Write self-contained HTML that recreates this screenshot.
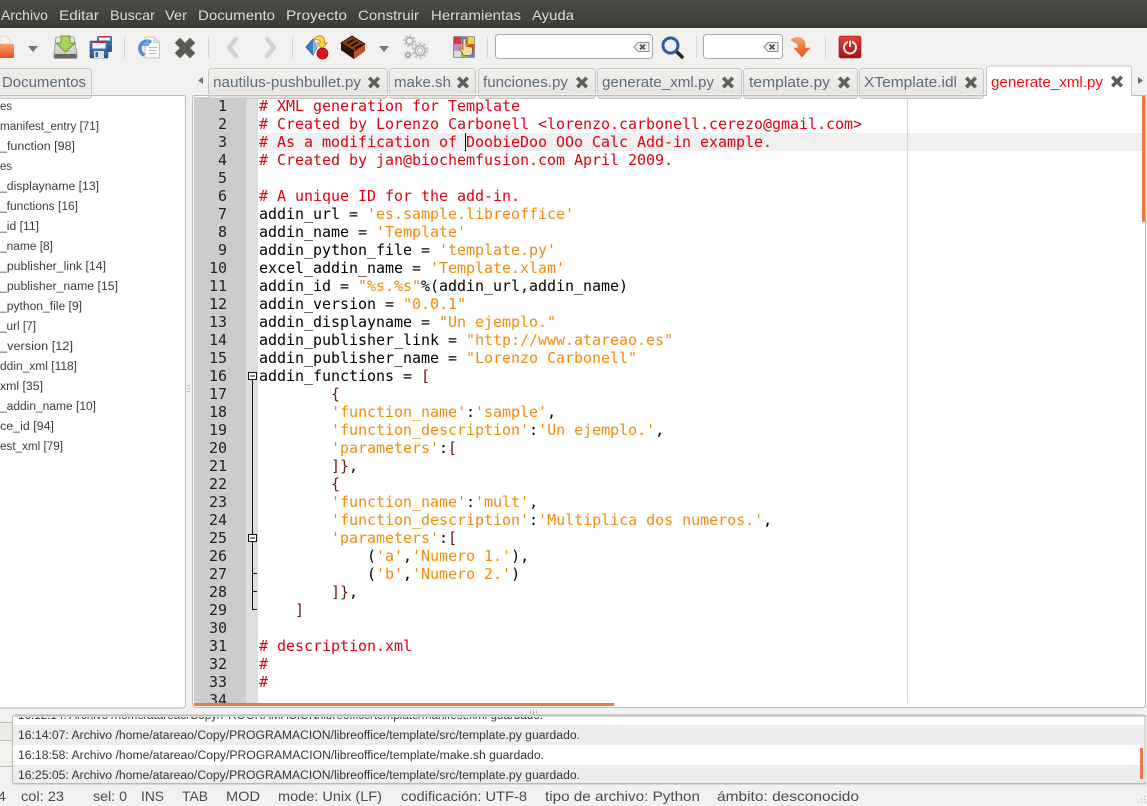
<!DOCTYPE html>
<html><head><meta charset="utf-8">
<style>
html,body{margin:0;padding:0;width:1147px;height:806px;overflow:hidden;background:#f2f1f0}
#code,#nums{position:absolute;top:0;margin:0;font:15px/18px "DejaVu Sans Mono","Liberation Mono",monospace;white-space:pre;letter-spacing:-.03px}
#code{left:65px;color:#000}
#nums{left:0;width:33px;text-align:right;color:#222}
#clip{position:absolute;left:194px;top:97px;width:950px;height:606px;overflow:hidden;z-index:1}
.c{color:#e3000f}.s{color:#f58a0b}.b{color:#6b1414}
svg{position:absolute;left:0;top:0}
#top{z-index:3}
#bg{z-index:0}
text{font-family:"Liberation Sans","DejaVu Sans",sans-serif}
</style></head><body>
<svg id="bg" width="1147" height="806" viewBox="0 0 1147 806">
<defs>
<linearGradient id="menu" x1="0" y1="0" x2="0" y2="1"><stop offset="0" stop-color="#504e48"/><stop offset=".15" stop-color="#4b4943"/><stop offset="1" stop-color="#3d3b36"/></linearGradient>
<linearGradient id="tab" x1="0" y1="0" x2="0" y2="1"><stop offset="0" stop-color="#f2f1f0"/><stop offset="1" stop-color="#e4e2df"/></linearGradient>
<linearGradient id="org" x1="0" y1="0" x2="0" y2="1"><stop offset="0" stop-color="#f6a26b"/><stop offset="1" stop-color="#e5511e"/></linearGradient>
<linearGradient id="red" x1="0" y1="0" x2="0" y2="1"><stop offset="0" stop-color="#e63c3c"/><stop offset="1" stop-color="#a01418"/></linearGradient>
<linearGradient id="disk" x1="0" y1="0" x2="0" y2="1"><stop offset="0" stop-color="#ecece8"/><stop offset="1" stop-color="#c4c4be"/></linearGradient>
<linearGradient id="blue" x1="0" y1="0" x2="0" y2="1"><stop offset="0" stop-color="#4f7fc0"/><stop offset="1" stop-color="#2a5496"/></linearGradient>
</defs>
<rect width="1147" height="806" fill="#f2f1f0"/>
<rect width="1147" height="28" fill="url(#menu)"/>
<!-- side panel frame -->
<rect x="-4" y="95" width="189.500" height="613" rx="3" fill="#fff" stroke="#bdbab3"/>
<!-- editor frame -->
<rect x="192.500" y="95.500" width="953" height="612" rx="3" fill="#fff" stroke="#bdbab3"/>
<rect x="194" y="97" width="52" height="606" fill="#cccccc"/>
<rect x="246" y="97" width="12" height="606" fill="#dedede"/>
<rect x="258" y="133" width="886" height="18" fill="#f0f0f0"/>
<rect x="907" y="97" width="1" height="606" fill="#c9e6c4"/>
<!-- message panel -->
<rect x="12" y="716" width="1133" height="67" fill="#fff"/>
<rect x="13" y="725" width="1131" height="20" fill="#ededed"/>
<rect x="13" y="765" width="1131" height="18" fill="#ededed"/>
</svg>
<div id="clip">
<pre id="nums">1
2
3
4
5
6
7
8
9
10
11
12
13
14
15
16
17
18
19
20
21
22
23
24
25
26
27
28
29
30
31
32
33
34</pre>
<pre id="code"><span class="c"># XML generation for Template
# Created by Lorenzo Carbonell &lt;lorenzo.carbonell.cerezo@gmail.com&gt;
# As a modification of DoobieDoo OOo Calc Add-in example.
# Created by jan@biochemfusion.com April 2009.

# A unique ID for the add-in.</span>
addin_url = <span class="s">'es.sample.libreoffice'</span>
addin_name = <span class="s">'Template'</span>
addin_python_file = <span class="s">'template.py'</span>
excel_addin_name = <span class="s">'Template.xlam'</span>
addin_id = <span class="s">"%s.%s"</span>%(addin_url,addin_name)
addin_version = <span class="s">"0.0.1"</span>
addin_displayname = <span class="s">"Un ejemplo."</span>
addin_publisher_link = <span class="s">"http://www.atareao.es"</span>
addin_publisher_name = <span class="s">"Lorenzo Carbonell"</span>
addin_functions = <span class="b">[</span>
        <span class="b">{</span>
        <span class="s">'function_name'</span>:<span class="s">'sample'</span>,
        <span class="s">'function_description'</span>:<span class="s">'Un ejemplo.'</span>,
        <span class="s">'parameters'</span>:<span class="b">[</span>
        <span class="b">]}</span>,
        <span class="b">{</span>
        <span class="s">'function_name'</span>:<span class="s">'mult'</span>,
        <span class="s">'function_description'</span>:<span class="s">'Multiplica dos numeros.'</span>,
        <span class="s">'parameters'</span>:<span class="b">[</span>
            (<span class="s">'a'</span>,<span class="s">'Numero 1.'</span>),
            (<span class="s">'b'</span>,<span class="s">'Numero 2.'</span>)
        <span class="b">]}</span>,
    <span class="b">]</span>

<span class="c"># description.xml
#
#</span>
</pre>
</div>
<svg id="top" width="1147" height="806" viewBox="0 0 1147 806">
<!-- menu -->
<g font-size="14" fill="#dfdbd2">
<text x="1" y="20" textLength="47" lengthAdjust="spacingAndGlyphs">Archivo</text>
<text x="59" y="20" textLength="40" lengthAdjust="spacingAndGlyphs">Editar</text>
<text x="110" y="20" textLength="45" lengthAdjust="spacingAndGlyphs">Buscar</text>
<text x="165" y="20" textLength="22" lengthAdjust="spacingAndGlyphs">Ver</text>
<text x="198" y="20" textLength="77" lengthAdjust="spacingAndGlyphs">Documento</text>
<text x="286" y="20" textLength="61" lengthAdjust="spacingAndGlyphs">Proyecto</text>
<text x="358" y="20" textLength="61" lengthAdjust="spacingAndGlyphs">Construir</text>
<text x="431" y="20" textLength="90" lengthAdjust="spacingAndGlyphs">Herramientas</text>
<text x="532" y="20" textLength="42" lengthAdjust="spacingAndGlyphs">Ayuda</text>
</g>
<!-- separators -->
<g fill="#d8d6d2">
<rect x="124" y="36" width="1" height="22"/><rect x="208" y="36" width="1" height="22"/><rect x="292" y="36" width="1" height="22"/>
<rect x="487" y="36" width="1" height="22"/><rect x="696" y="36" width="1" height="22"/><rect x="825" y="36" width="1" height="22"/>
</g>
<!-- new/open -->
<path d="M0 36h6l4 4v4H0z" fill="#f6f3ee" stroke="#c8c4bc" stroke-width=".6"/>
<path d="M0 44h13a1 1 0 0 1 1 1v12a1 1 0 0 1-1 1H0z" fill="url(#org)"/>
<path d="M28 46h10l-5 6z" fill="#77756f"/>
<!-- save: disk w/ green arrow -->
<path d="M56 37h18l3 17v3a1.500 1.500 0 0 1-1.500 1.500h-20A1.500 1.500 0 0 1 54 57v-3z" fill="url(#disk)" stroke="#8f8f89" stroke-width=".8"/>
<rect x="54.500" y="54" width="22" height="4" rx="1" fill="#66665f"/>
<path d="M61 36h9v7h5l-9.500 9-9.500-9h5z" fill="#a8d45a" stroke="#6a9a22" stroke-width="1"/>
<!-- save all -->
<rect x="97" y="36" width="15" height="16" rx="1" fill="url(#blue)"/>
<rect x="99" y="36.500" width="11" height="4" fill="#f3f3f3"/><rect x="99" y="36" width="11" height="1.500" fill="#c8262a"/>
<rect x="90" y="41" width="18" height="17" rx="1" fill="url(#blue)" stroke="#24467c" stroke-width=".6"/>
<rect x="92.500" y="41.500" width="13" height="7" fill="#f5f5f5"/><rect x="92.500" y="41" width="13" height="2" fill="#c8262a"/>
<rect x="94" y="51" width="10" height="7" fill="#e2e2e2"/><rect x="95.500" y="52" width="2.500" height="5" fill="#3f5f8f"/>
<!-- reload doc -->
<path d="M145 37h9l5.500 5.500V58H145z" fill="#f8f8f6" stroke="#b8b8b2" stroke-width=".8"/>
<path d="M154 37v6h5.500" fill="#e0e0dc" stroke="#b8b8b2" stroke-width=".6"/>
<g stroke="#c0c0bc" stroke-width="1"><path d="M149 47.500h8M149 50.500h8M149 53.500h8"/></g>
<path d="M151 42.500a7 7 0 0 0-11 4.500 7 7 0 0 0 4.500 8" fill="none" stroke="#4d8fd0" stroke-width="3.500"/>
<path d="M149 38.500v7.500h-7z" fill="#6fa8de"/>
<!-- close x -->
<path d="M175 43l5-5 5 5 5-5 5 5-5 5 5 5-5 5-5-5-5 5-5-5 5-5z" fill="#5a5a56" stroke="#7c7c78" stroke-width=".6" stroke-linejoin="round"/>
<!-- nav -->
<path d="M236 39l-7 8.500 7 8.500" fill="none" stroke="#d3d2cf" stroke-width="4.500" stroke-linejoin="round" stroke-linecap="round"/>
<path d="M267 39l7 8.500-7 8.500" fill="none" stroke="#d3d2cf" stroke-width="4.500" stroke-linejoin="round" stroke-linecap="round"/>
<!-- compile -->
<path d="M306 47l7-8 4 8-4 8z" fill="#3f7fc4" stroke="#204f8c" stroke-width=".8"/><path d="M313 39l4 8-4 8z" fill="#8db8e4"/>
<path d="M314 40c1-4 7-6 10-2 1 2 1 3 0 5h3l-5 6-5-6h3c1-3-2-4-6-3z" fill="#f6d64c" stroke="#b08a10" stroke-width=".8"/>
<circle cx="322.500" cy="53.500" r="5.500" fill="#e01222" stroke="#8a0a14" stroke-width=".7"/>
<!-- brick -->
<path d="M341 43l11-7 13 8v7l-11 8-13-9z" fill="#7a3410"/>
<path d="M341 43l13 8v8l-13-9z" fill="#2b1206"/>
<path d="M354 51l11-7v7l-11 8z" fill="#c2521a"/>
<path d="M341 43l11-7 13 8-11 7z" fill="#8e3e12" stroke="#1f0c04" stroke-width=".8"/>
<path d="M346 43l7-4 2 1-7 4zM350 45.500l7-4 2 1-7 4zM354 48l7-4 1.500 1-7 4z" fill="#1a0a02"/>
<path d="M379 46h10l-5 6z" fill="#77756f"/>
<!-- gears -->
<g fill="none" stroke="#c4c3bf">
<circle cx="409.500" cy="41" r="5.300" stroke-width="2" stroke-dasharray="2.200 1.900"/>
<circle cx="409.500" cy="41" r="3.400" stroke="#adaca8" stroke-width="1.600"/>
<circle cx="420" cy="50.500" r="7.300" stroke-width="2" stroke-dasharray="2.600 2.100"/>
<circle cx="420" cy="50.500" r="5" stroke="#b9b8b4" stroke-width="2"/>
<circle cx="420" cy="50.500" r="2.600" stroke="#a8a7a3" stroke-width=".8"/>
<circle cx="408" cy="55" r="3.400" stroke-width="1.500" stroke-dasharray="1.600 1.200"/>
<circle cx="408" cy="55" r="2" stroke="#a5a4a0" stroke-width="1.500"/>
</g>
<!-- color chooser -->
<g>
<rect x="453" y="36" width="22" height="22" rx="1.500" fill="#ddd"/>
<rect x="454" y="37" width="7" height="7" fill="#d8343c"/><rect x="461" y="37" width="7" height="7" fill="#5a8fd0"/><rect x="468" y="37" width="6" height="7" fill="#f6d32d"/>
<rect x="454" y="44" width="7" height="7" fill="#b98fc0"/><rect x="461" y="44" width="7" height="7" fill="#f2a438"/><rect x="468" y="44" width="6" height="7" fill="#d84a3c"/>
<rect x="454" y="51" width="7" height="6" fill="#dcdcd8"/><rect x="461" y="51" width="7" height="6" fill="#7ac043"/><rect x="468" y="51" width="6" height="6" fill="#4f8fd8"/>
<path d="M463 40c0-2 3-2 3 0v6l5 1c1 0 1.500 1 1.500 2v3c0 2-1.500 3.500-3 3.500h-4c-1.500 0-2.500-1-3-2l-2.500-4c-.5-1.500 1-2 2-1l1 1z" fill="#f5d8a8" stroke="#8a5a1e" stroke-width=".8"/>
<rect x="453.500" y="36.500" width="21" height="21" rx="1.500" fill="none" stroke="#7d7d78" stroke-width=".8"/>
</g>
<!-- entries -->
<rect x="495.500" y="34.500" width="157" height="24" rx="3" fill="#fff" stroke="#a9a7a1"/>
<rect x="703.500" y="34.500" width="79" height="24" rx="3" fill="#fff" stroke="#a9a7a1"/>
<g id="clr1"><path d="M634 47l4-4.500h11v9h-11z" fill="#f2f2f0" stroke="#8d8d88" stroke-width="1"/><path d="M640 44.500l5 5M645 44.500l-5 5" stroke="#555" stroke-width="1.800"/></g>
<path d="M764 47l4-4.500h10v9h-10z" fill="#f2f2f0" stroke="#8d8d88" stroke-width="1"/><path d="M769.500 44.500l5 5M774.500 44.500l-5 5" stroke="#555" stroke-width="1.800"/>
<!-- search -->
<path d="M677 52l5 5" stroke="#222" stroke-width="3.500" stroke-linecap="round"/>
<circle cx="670.500" cy="45.500" r="7.500" fill="#eef3fa" stroke="#2f5da6" stroke-width="3"/>
<!-- jump -->
<path d="M791 40c5-4 13-3 14 4v4h5l-8 9-8-9h4v-3c-1-2-4-3-7-5z" fill="url(#org)" stroke="#d9601e" stroke-width=".5"/>
<!-- quit -->
<rect x="839" y="36" width="22" height="22" rx="2" fill="url(#red)" stroke="#8c1418" stroke-width=".6"/>
<circle cx="850" cy="47.500" r="6" fill="none" stroke="#fbe8e8" stroke-width="2"/>
<rect x="848" y="40" width="4" height="7" fill="#c92a2e"/><rect x="849" y="40.500" width="2" height="6.500" fill="#fbe8e8"/>
<!-- tabs -->
<rect x="-4.500" y="68.500" width="96" height="30" rx="3" fill="#ecebe9" stroke="#cbc8c2"/>
<text x="2" y="87" font-size="14.500" fill="#5f6b78" textLength="84" lengthAdjust="spacingAndGlyphs">Documentos</text>
<path d="M203 77v7l-5-3.500z" fill="#706f6b"/>
<g fill="url(#tab)" stroke="#c8c5bf">
<rect x="208.500" y="68.500" width="179" height="30" rx="3"/>
<rect x="389.500" y="68.500" width="86" height="30" rx="3"/>
<rect x="478.500" y="68.500" width="117" height="30" rx="3"/>
<rect x="597.500" y="68.500" width="144" height="30" rx="3"/>
<rect x="743.500" y="68.500" width="114" height="30" rx="3"/>
<rect x="859.500" y="68.500" width="124" height="30" rx="3"/>
</g>
<rect x="0" y="94" width="1147" height="2" fill="#f2f1f0"/>
<rect x="0" y="95" width="185" height="1" fill="#bdbab3"/>
<rect x="193" y="95" width="953" height="1" fill="#bdbab3"/>
<path d="M986.500 96V69a3 3 0 0 1 3-3h139a3 3 0 0 1 3 3v27" fill="#fff" stroke="#c8c5bf"/>
<rect x="987" y="94" width="144" height="3" fill="#fff"/>
<g font-size="14.500" fill="#5f6b78">
<text x="213" y="87" textLength="148" lengthAdjust="spacingAndGlyphs">nautilus-pushbullet.py</text>
<text x="394" y="87" textLength="57" lengthAdjust="spacingAndGlyphs">make.sh</text>
<text x="483" y="87" textLength="85" lengthAdjust="spacingAndGlyphs">funciones.py</text>
<text x="602" y="87" textLength="112" lengthAdjust="spacingAndGlyphs">generate_xml.py</text>
<text x="749" y="87" textLength="81" lengthAdjust="spacingAndGlyphs">template.py</text>
<text x="864" y="87" textLength="93" lengthAdjust="spacingAndGlyphs">XTemplate.idl</text>
</g>
<text x="991" y="87" font-size="14.500" fill="#f01010" textLength="112" lengthAdjust="spacingAndGlyphs">generate_xml.py</text>
<g fill="#5f5f5c">
<path id="x" d="M368 79l2.500-2.500 3.500 3.500 3.500-3.500 2.500 2.500-3.500 3.500 3.500 3.500-2.500 2.500-3.500-3.500-3.500 3.500-2.500-2.500 3.500-3.500z"/>
<path transform="translate(89 0)" d="M368 79l2.500-2.500 3.500 3.500 3.500-3.500 2.500 2.500-3.500 3.500 3.500 3.500-2.500 2.500-3.500-3.500-3.500 3.500-2.500-2.500 3.500-3.500z"/>
<path transform="translate(208 0)" d="M368 79l2.500-2.500 3.500 3.500 3.500-3.500 2.500 2.500-3.500 3.500 3.500 3.500-2.500 2.500-3.500-3.500-3.500 3.500-2.500-2.500 3.500-3.500z"/>
<path transform="translate(354 0)" d="M368 79l2.500-2.500 3.500 3.500 3.500-3.500 2.500 2.500-3.500 3.500 3.500 3.500-2.500 2.500-3.500-3.500-3.500 3.500-2.500-2.500 3.500-3.500z"/>
<path transform="translate(470 0)" d="M368 79l2.500-2.500 3.500 3.500 3.500-3.500 2.500 2.500-3.500 3.500 3.500 3.500-2.500 2.500-3.500-3.500-3.500 3.500-2.500-2.500 3.500-3.500z"/>
<path transform="translate(597 0)" d="M368 79l2.500-2.500 3.500 3.500 3.500-3.500 2.500 2.500-3.500 3.500 3.500 3.500-2.500 2.500-3.500-3.500-3.500 3.500-2.500-2.500 3.500-3.500z"/>
<path transform="translate(743 -1)" d="M368 79l2.500-2.500 3.500 3.500 3.500-3.500 2.500 2.500-3.500 3.500 3.500 3.500-2.500 2.500-3.500-3.500-3.500 3.500-2.500-2.500 3.500-3.500z"/>
</g>
<path d="M1138 77v7l5-3.500z" fill="#706f6b"/>
<!-- sidebar list -->
<g font-size="11.500" fill="#3c3c3c">
<text x="0" y="110">es</text>
<text x="0" y="130" textLength="99" lengthAdjust="spacingAndGlyphs">manifest_entry [71]</text>
<text x="0" y="150" textLength="75" lengthAdjust="spacingAndGlyphs">_function [98]</text>
<text x="0" y="170">es</text>
<text x="0" y="190" textLength="99" lengthAdjust="spacingAndGlyphs">_displayname [13]</text>
<text x="0" y="210" textLength="78" lengthAdjust="spacingAndGlyphs">_functions [16]</text>
<text x="0" y="230" textLength="39" lengthAdjust="spacingAndGlyphs">_id [11]</text>
<text x="0" y="250" textLength="53" lengthAdjust="spacingAndGlyphs">_name [8]</text>
<text x="0" y="270" textLength="106" lengthAdjust="spacingAndGlyphs">_publisher_link [14]</text>
<text x="0" y="290" textLength="118" lengthAdjust="spacingAndGlyphs">_publisher_name [15]</text>
<text x="0" y="310" textLength="82" lengthAdjust="spacingAndGlyphs">_python_file [9]</text>
<text x="0" y="330" textLength="36" lengthAdjust="spacingAndGlyphs">_url [7]</text>
<text x="0" y="350" textLength="73" lengthAdjust="spacingAndGlyphs">_version [12]</text>
<text x="0" y="370" textLength="77" lengthAdjust="spacingAndGlyphs">ddin_xml [118]</text>
<text x="0" y="390" textLength="43" lengthAdjust="spacingAndGlyphs">xml [35]</text>
<text x="0" y="410" textLength="96" lengthAdjust="spacingAndGlyphs">_addin_name [10]</text>
<text x="0" y="430" textLength="54" lengthAdjust="spacingAndGlyphs">ce_id [94]</text>
<text x="0" y="450" textLength="63" lengthAdjust="spacingAndGlyphs">est_xml [79]</text>
</g>
<!-- grips -->
<path d="M187 385.500h3M187 388.500h3M187 391.500h3" stroke="#c0bdb6"/>
<path d="M530.500 710v4M533.500 710v4M536.500 710v4" stroke="#c0bdb6"/>
<!-- caret -->
<rect x="465" y="133" width="1" height="18" fill="#000"/>
<!-- fold markers -->
<g stroke="#111" fill="none">
<path d="M252.500 380v229.500H257M252.500 573.500H257M252.500 591.500H257"/>
<rect x="248.500" y="372.500" width="8" height="7" fill="#fff"/>
<rect x="248.500" y="534.500" width="8" height="7" fill="#fff"/>
<path d="M250 376h5M250 538h5"/>
</g>
<!-- overlay scroll -->
<rect x="1142" y="96" width="3" height="126" fill="#ee7647"/>
<rect x="194" y="703" width="420" height="3" fill="#ee7647"/>
<!-- message frame -->
<path d="M12.500 783V718a3 3 0 0 1 3-3H1142a3 3 0 0 1 3 3v65" fill="none" stroke="#bdbab3" stroke-width="1"/>
<rect x="13" y="715" width="1133" height="1.500" fill="#bdbab3"/>
<rect x="13" y="783" width="1133" height="1.500" fill="#bdbab3"/>
<rect x="0" y="722" width="12" height="19" fill="#ecebe9"/>
<path d="M0 722.500H12M0 740.500H12M0 766.500H12" stroke="#bdbab3"/>
<rect x="1140" y="748" width="3" height="31" fill="#ee7647"/>
<g font-size="11.500" fill="#333">
<clipPath id="mclip"><rect x="13" y="717" width="1130" height="8"/></clipPath>
<text x="18" y="719" clip-path="url(#mclip)" textLength="525" lengthAdjust="spacingAndGlyphs">16:12:14: Archivo /home/atareao/Copy/PROGRAMACION/libreoffice/template/manifest.xml guardado.</text>
<text x="18" y="739" textLength="562" lengthAdjust="spacingAndGlyphs">16:14:07: Archivo /home/atareao/Copy/PROGRAMACION/libreoffice/template/src/template.py guardado.</text>
<text x="18" y="759" textLength="526" lengthAdjust="spacingAndGlyphs">16:18:58: Archivo /home/atareao/Copy/PROGRAMACION/libreoffice/template/make.sh guardado.</text>
<text x="18" y="779" textLength="562" lengthAdjust="spacingAndGlyphs">16:25:05: Archivo /home/atareao/Copy/PROGRAMACION/libreoffice/template/src/template.py guardado.</text>
</g>
<!-- status -->
<g font-size="14" fill="#4c4c4a">
<text x="-2" y="801">4</text>
<text x="21" y="801" textLength="43" lengthAdjust="spacingAndGlyphs">col: 23</text>
<text x="93" y="801" textLength="34" lengthAdjust="spacingAndGlyphs">sel: 0</text>
<text x="141" y="801" textLength="23" lengthAdjust="spacingAndGlyphs">INS</text>
<text x="182" y="801" textLength="26" lengthAdjust="spacingAndGlyphs">TAB</text>
<text x="226" y="801" textLength="34" lengthAdjust="spacingAndGlyphs">MOD</text>
<text x="278" y="801" textLength="104" lengthAdjust="spacingAndGlyphs">mode: Unix (LF)</text>
<text x="401" y="801" textLength="126" lengthAdjust="spacingAndGlyphs">codificación: UTF-8</text>
<text x="545" y="801" textLength="155" lengthAdjust="spacingAndGlyphs">tipo de archivo: Python</text>
<text x="717" y="801" textLength="142" lengthAdjust="spacingAndGlyphs">ámbito: desconocido</text>
</g>
<g fill="#b8b5ae"><rect x="1144" y="796" width="1" height="1"/><rect x="1141" y="799" width="1" height="1"/><rect x="1144" y="799" width="1" height="1"/><rect x="1138" y="802" width="1" height="1"/><rect x="1141" y="802" width="1" height="1"/><rect x="1144" y="802" width="1" height="1"/></g>
</svg>
</body></html>
